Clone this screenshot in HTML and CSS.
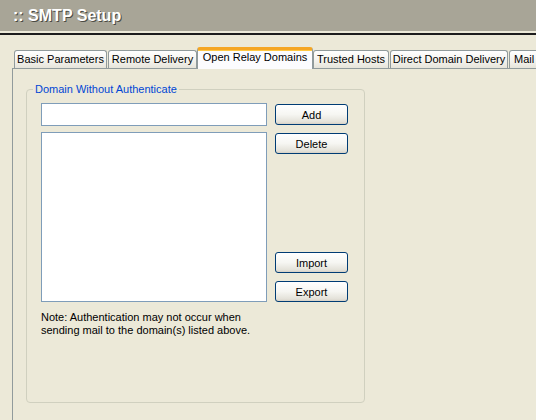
FILE: index.html
```html
<!DOCTYPE html>
<html>
<head>
<meta charset="utf-8">
<link rel="stylesheet" href="styles.css">
</head>
<body>
<div class="header"><span class="title">:: SMTP Setup</span></div>
<div class="rule"></div>
<div class="tabs">
  <div class="tab w-basic">Basic Parameters</div>
  <div class="tab w-remote">Remote Delivery</div>
  <div class="tab active w-open">Open Relay Domains</div>
  <div class="tab w-trusted">Trusted Hosts</div>
  <div class="tab w-direct">Direct Domain Delivery</div>
  <div class="tab w-mail">Mail</div>
</div>
<div class="panel">
  <fieldset class="group">
    <legend>Domain Without Authenticate</legend>
    <div class="content">
      <div class="row">
        <div class="left">
          <div class="textbox"></div>
          <div class="listbox"></div>
        </div>
        <div class="right">
          <div class="btn-pair">
            <button class="btn first">Add</button>
            <button class="btn">Delete</button>
          </div>
          <div class="btn-pair">
            <button class="btn">Import</button>
            <button class="btn">Export</button>
          </div>
        </div>
      </div>
      <p class="note">Note: Authentication may not occur when<br>sending mail to the domain(s) listed above.</p>
    </div>
  </fieldset>
</div>
</body>
</html>
```
FILE: styles.css
```css
html, body {
  margin: 0;
  padding: 0;
}
body {
  background: #ece9d8;
  font-family: "Liberation Sans", Arial, sans-serif;
  font-size: 11px;
  color: #000;
  width: 536px;
  height: 420px;
  overflow: hidden;
}
.header {
  height: 31px;
  background: #a8a597;
  padding-left: 13px;
  line-height: 31px;
}
.title {
  font-size: 16px;
  font-weight: bold;
  color: #fff;
  text-shadow: 1px 1px 0 #4a4a44;
}
.rule {
  margin-top: 2px;
  height: 2px;
  background: #1c1c1c;
}
.tabs {
  margin-top: 12px;
  margin-left: 14px;
  display: flex;
  align-items: flex-end;
  gap: 1px;
  white-space: nowrap;
  position: relative;
  z-index: 1;
}
.tab {
  flex: none;
  box-sizing: border-box;
  height: 18px;
  border: 1px solid #919b9c;
  border-bottom: none;
  border-radius: 3px 3px 0 0;
  background: linear-gradient(#ffffff, #f3f2ec 60%, #e6e4da);
  text-align: center;
  line-height: 17px;
  overflow: hidden;
}
.tab.active {
  height: 22px;
  margin-bottom: -1px;
  background: #fcfcfe;
  border-top: 3px solid #f5a623;
  box-shadow: inset 0 1px 0 #ffc843;
  line-height: 15px;
  margin-left: -1px;
  margin-right: -1px;
  padding: 0 1px;
}
.w-basic { width: 93px; }
.w-remote { width: 89px; }
.w-open { width: 116px; }
.w-trusted { width: 76px; }
.w-direct { width: 118px; }
.w-mail { width: 40px; text-align: left; padding-left: 4px; }
.panel {
  margin-left: 12px;
  border-left: 1px solid #919b9c;
  border-top: 1px solid #919b9c;
  height: 360px;
  padding-left: 13px;
  padding-top: 14px;
  box-sizing: border-box;
}
.group {
  box-sizing: border-box;
  width: 339px;
  height: 320px;
  margin: 0;
  border: 1px solid #d0d0bf;
  border-radius: 4px;
  padding: 7px 0 0 0;
}
.group legend {
  color: #0046d5;
  padding: 0 2px;
  margin-left: 6px;
  line-height: 13px;
}
.content {
  padding: 0 14px;
}
.row {
  display: flex;
  gap: 8px;
}
.left {
  width: 226px;
  display: flex;
  flex-direction: column;
  gap: 6px;
}
.textbox {
  box-sizing: border-box;
  height: 23px;
  background: #fff;
  border: 1px solid #7f9db9;
}
.listbox {
  box-sizing: border-box;
  height: 170px;
  background: #fff;
  border: 1px solid #7f9db9;
}
.right {
  width: 73px;
  display: flex;
  flex-direction: column;
  justify-content: space-between;
}
.btn-pair {
  display: flex;
  flex-direction: column;
  gap: 8px;
}
.btn {
  box-sizing: border-box;
  width: 73px;
  height: 21px;
  border: 1px solid #003c74;
  border-radius: 3px;
  background: linear-gradient(#ffffff, #f6f6f2 50%, #e3e1d8 90%, #d6d0c5);
  font-family: "Liberation Sans", Arial, sans-serif;
  font-size: 11px;
  font-weight: normal;
  color: #000;
  padding: 0;
  margin: 0;
}
.btn.first {
  margin-top: 1px;
}
.note {
  margin: 9px 0 0 0;
  line-height: 13px;
}
```
